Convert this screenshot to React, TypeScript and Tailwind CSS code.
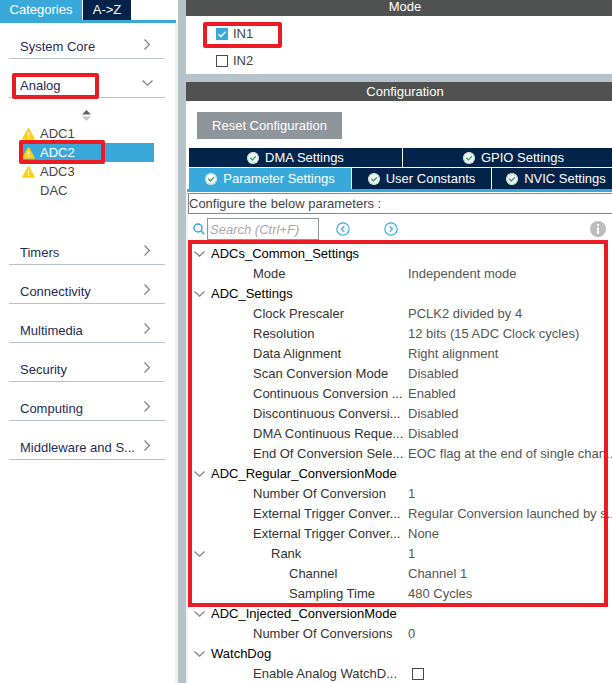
import React from "react";

type Row = {
  label: string;
  level: "group" | "item" | "sub" | "leaf";
  value?: string;
  open?: boolean;
  check?: boolean;
};

const markedRows: Row[] = [
  { label: "ADCs_Common_Settings", level: "group", open: true },
  { label: "Mode", level: "item", value: "Independent mode" },
  { label: "ADC_Settings", level: "group", open: true },
  { label: "Clock Prescaler", level: "item", value: "PCLK2 divided by 4" },
  { label: "Resolution", level: "item", value: "12 bits (15 ADC Clock cycles)" },
  { label: "Data Alignment", level: "item", value: "Right alignment" },
  { label: "Scan Conversion Mode", level: "item", value: "Disabled" },
  { label: "Continuous Conversion ...", level: "item", value: "Enabled" },
  { label: "Discontinuous Conversi...", level: "item", value: "Disabled" },
  { label: "DMA Continuous Reque...", level: "item", value: "Disabled" },
  { label: "End Of Conversion Sele...", level: "item", value: "EOC flag at the end of single chan..." },
  { label: "ADC_Regular_ConversionMode", level: "group", open: true },
  { label: "Number Of Conversion", level: "item", value: "1" },
  { label: "External Trigger Conver...", level: "item", value: "Regular Conversion launched by s..." },
  { label: "External Trigger Conver...", level: "item", value: "None" },
  { label: "Rank", level: "sub", value: "1", open: true },
  { label: "Channel", level: "leaf", value: "Channel 1" },
  { label: "Sampling Time", level: "leaf", value: "480 Cycles" },
];

const otherRows: Row[] = [
  { label: "ADC_Injected_ConversionMode", level: "group", open: true },
  { label: "Number Of Conversions", level: "item", value: "0" },
  { label: "WatchDog", level: "group", open: true },
  { label: "Enable Analog WatchD...", level: "item", check: true },
];

const indent = { group: "pl-[2px]", item: "pl-11", sub: "pl-[62px]", leaf: "pl-20" };

function ChevronDown() {
  return (
    <svg className="h-[6px] w-[11px] shrink-0" viewBox="0 0 11 6" fill="none" stroke="#808080" strokeWidth="1.2">
      <path d="M0.5 0.5L5.5 5.2L10.5 0.5" />
    </svg>
  );
}

function ChevronRight() {
  return (
    <svg className="mr-[3px] h-[11px] w-[6px] shrink-0" viewBox="0 0 6 11" fill="none" stroke="#808080" strokeWidth="1.2">
      <path d="M0.5 0.5L5.4 5.5L0.5 10.5" />
    </svg>
  );
}

function CheckBadge() {
  return (
    <svg className="h-3 w-3 shrink-0" viewBox="0 0 12 12">
      <circle cx="6" cy="6" r="6" fill="#fff" />
      <circle cx="6" cy="6" r="5.2" fill="#fff" stroke="#9bd3b3" strokeWidth="0.8" />
      <path d="M3.2 5.8L5.4 8L8.9 4.2" fill="none" stroke="#35a069" strokeWidth="1.4" />
    </svg>
  );
}

function Warning() {
  return (
    <svg className="h-3 w-[13px] shrink-0" viewBox="0 0 13 12">
      <path d="M6.5 1L12 11H1Z" fill="#ffd10a" stroke="#ffd10a" strokeWidth="1.6" strokeLinejoin="round" />
      <path d="M6.5 4V7.6M6.5 8.8V10" stroke="#fff" strokeWidth="1.1" />
    </svg>
  );
}

function Checkbox({ id, label, on }: { id: string; label: string; on?: boolean }) {
  return (
    <span className="relative flex h-3 w-3 shrink-0">
      <input
        id={id}
        type="checkbox"
        aria-label={label}
        defaultChecked={on}
        className="peer h-3 w-3 appearance-none border border-[#4a4a4a] bg-white checked:border-[#39a9dc] checked:bg-[#39a9dc]"
      />
      <svg className="pointer-events-none absolute inset-0 hidden h-3 w-3 peer-checked:block" viewBox="0 0 12 12" fill="none" stroke="#fff" strokeWidth="1.4">
        <path d="M2.5 6.2L5 8.6L9.6 3.6" />
      </svg>
    </span>
  );
}

function Category({ name, open }: { name: string; open?: boolean }) {
  return (
    <button
      className="flex h-7 w-full items-start justify-between border-b border-[#b7c3ca] pr-3 pl-[11px] text-left text-[#1f2a5c]"
      aria-expanded={!!open}
    >
      <span className="pt-2">{name}</span>
      <span className={open ? "pt-[10px]" : "pt-2"}>{open ? <ChevronDown /> : <ChevronRight />}</span>
    </button>
  );
}

function Tab({ name, active, className = "" }: { name: string; active?: boolean; className?: string }) {
  return (
    <button
      role="tab"
      aria-selected={!!active}
      className={`flex min-w-0 items-center justify-center gap-[6px] whitespace-nowrap text-white ${active ? "bg-[#39a9dc]" : "bg-[#03234b]"} ${className}`}
    >
      <CheckBadge />
      {name}
    </button>
  );
}

function Rows({ rows }: { rows: Row[] }) {
  return (
    <table className="w-full table-fixed border-collapse">
      <colgroup>
        <col className="w-[15px]" />
        <col className="w-[199px]" />
        <col />
      </colgroup>
      <tbody>
        {rows.map((r, i) => (
          <tr key={i} className="h-5">
            <td className="p-0">{r.open && <ChevronDown />}</td>
            <td
              className={`whitespace-nowrap py-0 pr-0 ${indent[r.level]} ${r.level === "group" ? "text-black" : "text-[#333]"}`}
              colSpan={r.level === "group" ? 2 : 1}
            >
              {r.label}
            </td>
            {r.level !== "group" && (
              <td className="whitespace-nowrap p-0 text-[#555]">
                {r.check ? (
                  <span className="flex pl-1">
                    <Checkbox id="watchdog" label="Enable Analog WatchDog" />
                  </span>
                ) : (
                  r.value
                )}
              </td>
            )}
          </tr>
        ))}
      </tbody>
    </table>
  );
}

const devices = [
  { name: "ADC1", warn: true },
  { name: "ADC2", warn: true, selected: true },
  { name: "ADC3", warn: true },
  { name: "DAC" },
];

function Sidebar() {
  return (
    <aside className="w-[178px] shrink-0 bg-white">
      <div role="tablist" className="flex h-5 gap-px text-white">
        <button role="tab" aria-selected="true" className="h-5 w-[82px] bg-[#39a9dc] leading-5">Categories</button>
        <button role="tab" aria-selected="false" className="h-5 w-12 bg-[#03234b] leading-5">A-&gt;Z</button>
      </div>
      <div className="mr-[2px] h-[3px] bg-[#39a9dc]" />
      <div className="flex min-h-[660px] flex-col gap-[11px] border-r-[3px] border-[#f0f0f0] pt-2 pr-[10px] pl-[9px]">
        <Category name="System Core" />
        <div>
          <div className="relative">
            <Category name="Analog" open />
            <span className="pointer-events-none absolute top-[3px] left-[3px] h-[26px] w-[87px] rounded-[2px] border-4 border-[#ed1c24]" />
          </div>
          <div className="flex h-[26px] items-center pt-2 pl-[73px]">
            <svg className="h-[11px] w-[9px]" viewBox="0 0 9 11">
              <path d="M0 4.6L4.5 0L9 4.6Z" fill="#606060" />
              <path d="M0 6.4L4.5 11L9 6.4Z" fill="#c4c4c4" />
            </svg>
          </div>
          <ul className="mr-[11px] mb-[26px] ml-[13px]">
            {devices.map((d) => (
              <li
                key={d.name}
                className={`relative flex h-[19px] items-center gap-[5px] ${d.selected ? "bg-[#39a9dc] text-white" : "text-[#444]"}`}
              >
                {d.warn ? <Warning /> : <span className="w-[13px]" />}
                {d.name}
                {d.selected && (
                  <span className="pointer-events-none absolute -top-[3px] -left-[3px] h-6 w-[86px] rounded-[2px] border-4 border-[#ed1c24]" />
                )}
              </li>
            ))}
          </ul>
        </div>
        {["Timers", "Connectivity", "Multimedia", "Security", "Computing", "Middleware and S..."].map((n) => (
          <Category key={n} name={n} />
        ))}
      </div>
    </aside>
  );
}

function CircleArrow({ dir }: { dir: "left" | "right" }) {
  return (
    <button aria-label={dir === "left" ? "Previous" : "Next"}>
      <svg className="h-[14px] w-[14px]" viewBox="0 0 14 14" fill="none" stroke="#39a9dc" strokeWidth="1.2">
        <circle cx="7" cy="7" r="6.2" />
        <path d={dir === "left" ? "M8.3 4.2L5.5 7L8.3 9.8" : "M5.7 4.2L8.5 7L5.7 9.8"} />
      </svg>
    </button>
  );
}

export default function App() {
  return (
    <div className="flex min-h-screen overflow-hidden bg-[#b7c3ca] font-['Liberation_Sans',Arial,sans-serif] text-[13px] leading-4">
      <Sidebar />
      <main className="ml-2 flex min-w-0 flex-1 flex-col gap-2">
        <section>
          <h2 className="h-4 bg-[#4f5250] pl-3 text-center leading-[14px] text-white">Mode</h2>
          <div className="flex h-[58px] flex-col gap-[11px] bg-white pt-[10px] pl-[30px] text-[#444]">
            <div className="relative flex h-4 items-center gap-[5px]">
              <Checkbox id="in1" label="IN1" on />
              <label htmlFor="in1">IN1</label>
              <span className="pointer-events-none absolute -top-1 -left-[13px] h-[26px] w-[79px] rounded-[2px] border-4 border-[#ed1c24]" />
            </div>
            <div className="flex h-4 items-center gap-[5px]">
              <Checkbox id="in2" label="IN2" />
              <label htmlFor="in2">IN2</label>
            </div>
          </div>
        </section>
        <section className="flex-1 bg-white">
          <h2 className="h-[19px] bg-[#4f5250] pl-3 text-center leading-[19px] text-white">Configuration</h2>
          <button className="mt-[11px] ml-[11px] flex h-[27px] w-[145px] items-center justify-center bg-[#8e969c] text-white">
            Reset Configuration
          </button>
          <div role="tablist" className="mt-[9px] ml-[3px] flex flex-col gap-px">
            <div className="grid h-[19px] grid-cols-[213fr_209fr] gap-px">
              <Tab name="DMA Settings" />
              <Tab name="GPIO Settings" className="pl-3" />
            </div>
            <div className="grid h-[21px] grid-cols-[162fr_139fr_120fr] gap-px">
              <Tab name="Parameter Settings" active />
              <Tab name="User Constants" />
              <Tab name="NVIC Settings" className="pl-2" />
            </div>
          </div>
          <div className="ml-px h-[3px] bg-[#39a9dc]" />
          <div className="border-l-2 border-[#f0f0f0]">
            <p className="mt-px h-[21px] border-y border-l border-[#808890] leading-[19px] text-[#444]">
              Configure the below parameters :
            </p>
            <div className="flex h-[30px] items-center pr-[6px] pl-[5px]">
              <svg className="mr-[2px] h-3 w-3" viewBox="0 0 12 12" fill="none" stroke="#39a9dc" strokeWidth="1.5">
                <circle cx="5" cy="5" r="4" />
                <path d="M8 8L11.3 11.3" />
              </svg>
              <input
                aria-label="Search"
                placeholder="Search (Ctrl+F)"
                className="h-[22px] w-28 border border-[#8e969c] px-[2px] italic placeholder:text-[#a8a8a8]"
              />
              <div className="ml-[17px] flex gap-[34px]">
                <CircleArrow dir="left" />
                <CircleArrow dir="right" />
              </div>
              <svg className="ml-auto h-4 w-4" viewBox="0 0 16 16">
                <circle cx="8" cy="8" r="8" fill="#bdbdbd" />
                <path d="M8 3V5M8 6.5V13" stroke="#fff" strokeWidth="2" />
              </svg>
            </div>
            <div className="relative pl-[6px]">
              <Rows rows={markedRows} />
              <span className="pointer-events-none absolute -top-1 right-1 -bottom-[3px] left-0 border-4 border-[#ed1c24]" />
            </div>
            <div className="pl-[6px]">
              <Rows rows={otherRows} />
            </div>
          </div>
        </section>
      </main>
    </div>
  );
}
